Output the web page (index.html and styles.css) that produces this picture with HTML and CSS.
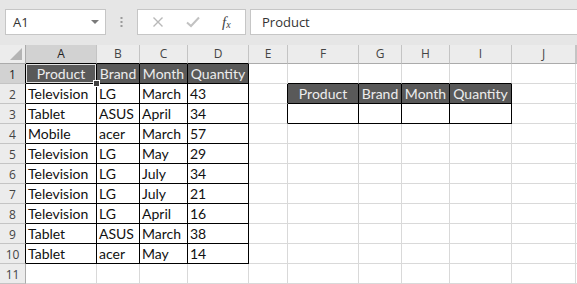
FILE: index.html
```html
<!DOCTYPE html>
<html lang="en">
  <head>
    <meta charset="UTF-8" />
    <title>Sheet</title>
    <link rel="stylesheet" href="styles.css">
  </head>
  <body>
    <!-- FORMULA BAR -->
    <div class="toolbar">
      <div class="namebox">
        <span>A1</span>
        <span class="caret"></span>
      </div>
      <div class="grip">
        <svg width="3" height="12" viewBox="0 0 3 12">
          <rect x="0.5" y="1" width="2" height="2" fill="#9a9a9a" />
          <rect x="0.5" y="5" width="2" height="2" fill="#9a9a9a" />
          <rect x="0.5" y="9" width="2" height="2" fill="#9a9a9a" />
        </svg>
      </div>
      <div class="fxbtns">
        <svg class="cancel" width="12" height="12" viewBox="0 0 12 12">
          <path d="M1.5 1.5 L10.5 10.5 M10.5 1.5 L1.5 10.5" stroke="#b8b8b8" stroke-width="1.4" fill="none" />
        </svg>
        <svg class="enter" width="14" height="12" viewBox="0 0 14 12">
          <path d="M1 6.5 L5 10 L13 1.5" stroke="#c2c2c2" stroke-width="2" fill="none" />
        </svg>
        <span class="fx">f<sub>x</sub></span>
      </div>
      <div class="formula">Product</div>
    </div>

    <!-- SHEET -->
    <div class="sheet">
      <div class="row head">
        <div class="corner">
          <svg width="12" height="12" viewBox="0 0 12 12">
            <polygon points="12,0 12,12 0,12" fill="#b4b4b4" />
          </svg>
        </div>
        <div class="colhead sel edge-b">A</div>
        <div class="colhead edge-b">B</div>
        <div class="colhead edge-b">C</div>
        <div class="colhead edge-b">D</div>
        <div class="colhead">E</div>
        <div class="colhead">F</div>
        <div class="colhead">G</div>
        <div class="colhead">H</div>
        <div class="colhead">I</div>
        <div class="colhead">J</div>
        <div class="colhead"></div>
      </div>

      <div class="row">
        <div class="rowhead sel edge-r">1</div>
        <div class="cell th box active">Product<span class="handle"></span></div>
        <div class="cell th box">Brand</div>
        <div class="cell th box">Month</div>
        <div class="cell th box">Quantity</div>
        <div class="cell"></div>
        <div class="cell edge-b"></div>
        <div class="cell edge-b"></div>
        <div class="cell edge-b"></div>
        <div class="cell edge-b"></div>
        <div class="cell"></div>
        <div class="cell"></div>
      </div>

      <div class="row">
        <div class="rowhead edge-r">2</div>
        <div class="cell box">Television</div>
        <div class="cell box">LG</div>
        <div class="cell box">March</div>
        <div class="cell box">43</div>
        <div class="cell edge-r"></div>
        <div class="cell th box">Product</div>
        <div class="cell th box">Brand</div>
        <div class="cell th box">Month</div>
        <div class="cell th box">Quantity</div>
        <div class="cell"></div>
        <div class="cell"></div>
      </div>

      <div class="row">
        <div class="rowhead edge-r">3</div>
        <div class="cell box">Tablet</div>
        <div class="cell box">ASUS</div>
        <div class="cell box">April</div>
        <div class="cell box">34</div>
        <div class="cell edge-r"></div>
        <div class="cell box"></div>
        <div class="cell box"></div>
        <div class="cell box"></div>
        <div class="cell box"></div>
        <div class="cell"></div>
        <div class="cell"></div>
      </div>

      <div class="row">
        <div class="rowhead edge-r">4</div>
        <div class="cell box">Mobile</div>
        <div class="cell box">acer</div>
        <div class="cell box">March</div>
        <div class="cell box">57</div>
        <div class="cell"></div>
        <div class="cell"></div>
        <div class="cell"></div>
        <div class="cell"></div>
        <div class="cell"></div>
        <div class="cell"></div>
        <div class="cell"></div>
      </div>

      <div class="row">
        <div class="rowhead edge-r">5</div>
        <div class="cell box">Television</div>
        <div class="cell box">LG</div>
        <div class="cell box">May</div>
        <div class="cell box">29</div>
        <div class="cell"></div>
        <div class="cell"></div>
        <div class="cell"></div>
        <div class="cell"></div>
        <div class="cell"></div>
        <div class="cell"></div>
        <div class="cell"></div>
      </div>

      <div class="row">
        <div class="rowhead edge-r">6</div>
        <div class="cell box">Television</div>
        <div class="cell box">LG</div>
        <div class="cell box">July</div>
        <div class="cell box">34</div>
        <div class="cell"></div>
        <div class="cell"></div>
        <div class="cell"></div>
        <div class="cell"></div>
        <div class="cell"></div>
        <div class="cell"></div>
        <div class="cell"></div>
      </div>

      <div class="row">
        <div class="rowhead edge-r">7</div>
        <div class="cell box">Television</div>
        <div class="cell box">LG</div>
        <div class="cell box">July</div>
        <div class="cell box">21</div>
        <div class="cell"></div>
        <div class="cell"></div>
        <div class="cell"></div>
        <div class="cell"></div>
        <div class="cell"></div>
        <div class="cell"></div>
        <div class="cell"></div>
      </div>

      <div class="row">
        <div class="rowhead edge-r">8</div>
        <div class="cell box">Television</div>
        <div class="cell box">LG</div>
        <div class="cell box">April</div>
        <div class="cell box">16</div>
        <div class="cell"></div>
        <div class="cell"></div>
        <div class="cell"></div>
        <div class="cell"></div>
        <div class="cell"></div>
        <div class="cell"></div>
        <div class="cell"></div>
      </div>

      <div class="row">
        <div class="rowhead edge-r">9</div>
        <div class="cell box">Tablet</div>
        <div class="cell box">ASUS</div>
        <div class="cell box">March</div>
        <div class="cell box">38</div>
        <div class="cell"></div>
        <div class="cell"></div>
        <div class="cell"></div>
        <div class="cell"></div>
        <div class="cell"></div>
        <div class="cell"></div>
        <div class="cell"></div>
      </div>

      <div class="row">
        <div class="rowhead edge-r">10</div>
        <div class="cell box">Tablet</div>
        <div class="cell box">acer</div>
        <div class="cell box">May</div>
        <div class="cell box">14</div>
        <div class="cell"></div>
        <div class="cell"></div>
        <div class="cell"></div>
        <div class="cell"></div>
        <div class="cell"></div>
        <div class="cell"></div>
        <div class="cell"></div>
      </div>

      <div class="row">
        <div class="rowhead">11</div>
        <div class="cell"></div>
        <div class="cell"></div>
        <div class="cell"></div>
        <div class="cell"></div>
        <div class="cell"></div>
        <div class="cell"></div>
        <div class="cell"></div>
        <div class="cell"></div>
        <div class="cell"></div>
        <div class="cell"></div>
        <div class="cell"></div>
      </div>
    </div>
  </body>
</html>
```

FILE: styles.css
```css
* {
  box-sizing: border-box;
}

body {
  margin: 0;
  width: 577px;
  height: 284px;
  overflow: hidden;
  background: #fff;
  font-family: "Lato", "Liberation Sans", sans-serif;
}

/* formula bar */
.toolbar {
  height: 45px;
  background: #e6e6e6;
  display: flex;
  align-items: flex-start;
  padding: 9px 0 0 5px;
}

.namebox {
  width: 101px;
  height: 26px;
  background: #fff;
  border: 1px solid #c6c6c6;
  display: flex;
  align-items: center;
  justify-content: space-between;
  padding: 0 6px 0 7px;
  font-family: "Open Sans", sans-serif;
  font-size: 13px;
  color: #333;
}

.caret {
  width: 0;
  height: 0;
  border-left: 4px solid transparent;
  border-right: 4px solid transparent;
  border-top: 4px solid #7a7a7a;
}

.grip {
  width: 31px;
  height: 26px;
  display: flex;
  align-items: center;
  justify-content: center;
}

.fxbtns {
  width: 109px;
  height: 26px;
  background: #fff;
  border: 1px solid #c6c6c6;
  display: flex;
  align-items: center;
  padding-left: 14px;
}

.fxbtns .enter {
  margin-left: 22px;
}

.fx {
  margin-left: 22px;
  font-family: "Liberation Serif", serif;
  font-style: italic;
  font-size: 15px;
  color: #444;
}

.fx sub {
  font-size: 10px;
  vertical-align: -1px;
}

.formula {
  flex: 1;
  height: 26px;
  margin-left: 4px;
  background: #fff;
  border: 1px solid #c6c6c6;
  border-right: none;
  padding-left: 11px;
  line-height: 24px;
  font-family: "Open Sans", sans-serif;
  font-size: 13px;
  color: #333;
}

/* grid */
.row {
  display: grid;
  grid-template-columns: 26px 71px 43px 48px 61px 39px 71px 43px 48px 62px 64px 1fr;
  grid-template-rows: 100%;
  height: 20px;
}

.row.head {
  height: 19px;
}

.corner,
.colhead,
.rowhead {
  background: #ececec;
  font-family: "Open Sans", sans-serif;
  font-size: 12px;
  color: #444;
  text-align: center;
}

.corner {
  border-right: 1px solid #ababab;
  border-bottom: 1px solid #ababab;
  display: flex;
  align-items: flex-end;
  justify-content: flex-end;
  padding: 0 3px 3px 0;
}

.colhead {
  border-right: 1px solid #c4c4c4;
  border-bottom: 1px solid #ababab;
  line-height: 18px;
}

.rowhead {
  border-right: 1px solid #ababab;
  border-bottom: 1px solid #c4c4c4;
  line-height: 19px;
  padding-top: 1px;
}

.colhead.sel,
.rowhead.sel {
  background: #d2d2d2;
  color: #222;
}

.cell {
  position: relative;
  border-right: 1px solid #d9d9d9;
  border-bottom: 1px solid #d9d9d9;
  padding: 1px 2px 0;
  font-size: 14px;
  line-height: 18px;
  color: #111;
  white-space: nowrap;
}

.cell.box {
  border-right-color: #000;
  border-bottom-color: #000;
}

.edge-b {
  border-bottom-color: #000;
}

.edge-r {
  border-right-color: #000;
}

.cell.th {
  background: #595959;
  color: #ededed;
  text-align: center;
  padding: 1px 0 0;
}

.cell.active {
  box-shadow: inset 0 0 0 1px #e2e2e2;
}

.handle {
  position: absolute;
  right: -4px;
  bottom: -4px;
  width: 7px;
  height: 7px;
  background: #404040;
  border: 1px solid #fff;
  z-index: 2;
}
```
